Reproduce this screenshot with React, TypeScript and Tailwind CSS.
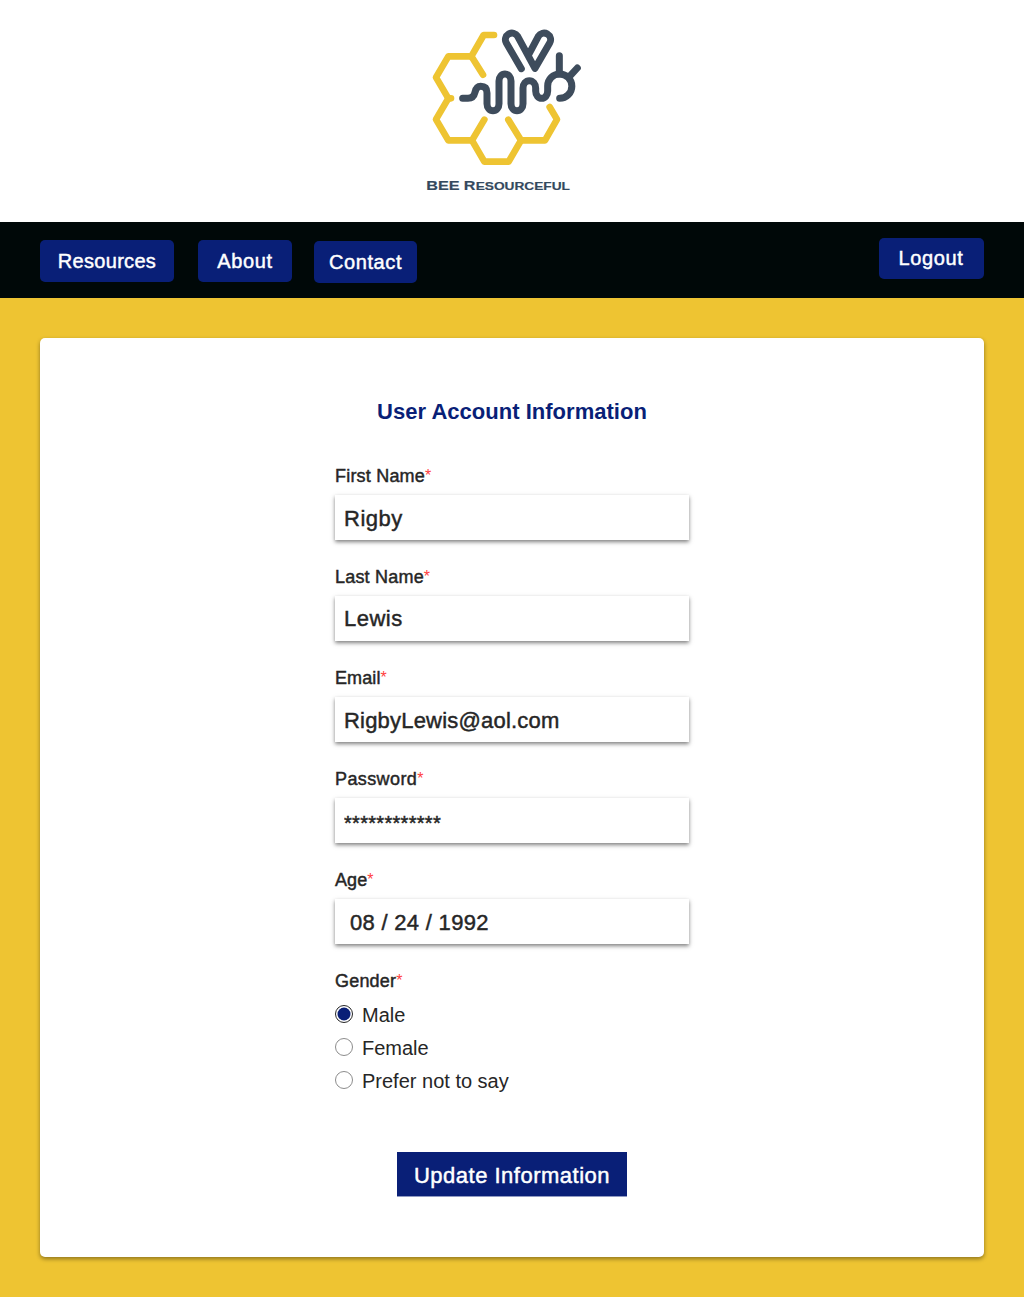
import React, { useState } from 'react';

const medium = '[-webkit-text-stroke:0.45px_currentColor]';

function Logo() {
  return (
    <svg viewBox="0 0 540 540" className="ml-[416px] h-[180px] w-[180px]" role="img" aria-label="BEE Resourceful">
      <g fill="none" stroke="#eec432" strokeWidth="20" strokeLinecap="round" strokeLinejoin="round">
        <path d="M234 45H203L166 109L201 164" />
        <path d="M166 109H97L60 172L97 235H105" />
        <path d="M97 235L60 298L97 361H168L205 299" />
        <path d="M168 361L205 425H278L315 361L277 299" />
        <path d="M315 361H387L423 298L401 261" />
      </g>
      <g fill="none" stroke="#3e4c5c" strokeWidth="21" strokeLinecap="round" strokeLinejoin="round">
        <path d="M140 235H156Q173 235 177 217Q181 199 194 199Q213 199 213 219V251A18 21 0 0 0 249 251V183A18 21 0 0 1 285 183V251A18 21 0 0 0 321 251V204A19 22 0 0 1 359 204V213A18 22 0 0 0 395 213V198A36 36 0 0 1 431 162A36.5 36.5 0 0 1 431 235" />
        <path d="M430 162V107M460 170L484 144" />
        <path d="M316 146L271 69A19.5 19.5 0 0 1 305 49L357 145L401 69A19.5 19.5 0 0 0 367 49L338 104" />
      </g>
      <g className="fill-[#34495e] stroke-[#34495e] font-['Liberation_Sans'] font-bold" strokeWidth="0.5">
        <text x="31" y="511" textLength="100" lengthAdjust="spacingAndGlyphs" className="text-[39px]">BEE</text>
        <text x="143" y="511" textLength="35" lengthAdjust="spacingAndGlyphs" className="text-[39px]">R</text>
        <text x="179" y="511" textLength="283" lengthAdjust="spacingAndGlyphs" className="text-[33px]">ESOURCEFUL</text>
      </g>
    </svg>
  );
}

const fields = [
  { label: 'First Name', labelCls: 'tracking-[0.2px]', value: 'Rigby', cls: 'pl-[9px] pt-[3px] text-[22px] tracking-[0.5px]' },
  { label: 'Last Name', labelCls: 'tracking-[0.2px]', value: 'Lewis', cls: 'pl-[9px] text-[22px] tracking-[0.5px]' },
  { label: 'Email', labelCls: 'tracking-[0.1px]', value: 'RigbyLewis@aol.com', cls: 'pl-[9px] pt-[3px] text-[22px] tracking-[0.2px]' },
  { label: 'Password', labelCls: 'tracking-[0.4px]', value: '************', cls: 'pl-[9px] pt-[6px] text-[20px] tracking-[0.3px]' },
  { label: 'Age', labelCls: 'tracking-[0.1px]', value: '08 / 24 / 1992', cls: 'pl-[15px] pt-[3px] text-[22px] tracking-[0.3px]' },
];

function Label({ text, cls }: { text: string; cls: string }) {
  return (
    <span className="flex h-[30px] items-start text-[18px] leading-[24px] text-[#262626]">
      <span className={`${medium} ${cls}`}>{text}</span>
      <span className="text-[16px] text-[#ff4040]">*</span>
    </span>
  );
}

export default function App() {
  const [gender, setGender] = useState('Male');
  return (
    <div className="w-[1024px] bg-white font-['Liberation_Sans',sans-serif]">
      <header className="h-[222px] pt-[20px]">
        <Logo />
      </header>
      <nav className={`flex h-[76px] items-start bg-[#000808] px-[40px] text-[20px] leading-[41px] text-white ${medium}`}>
        <button className="mt-[18px] h-[42px] w-[134px] rounded-[5px] bg-[#091f77] tracking-[0.3px]">Resources</button>
        <button className="ml-[24px] mt-[18px] h-[42px] w-[94px] rounded-[5px] bg-[#091f77] tracking-[0.6px]">About</button>
        <button className="ml-[22px] mt-[19px] h-[42px] w-[103px] rounded-[5px] bg-[#091f77] tracking-[0.6px]">Contact</button>
        <button className="ml-auto mt-[16px] h-[41px] w-[105px] rounded-[5px] bg-[#091f77] pr-[1px] tracking-[0.6px]">Logout</button>
      </nav>
      <main className="h-[999px] bg-[#eec432] p-[40px]">
        <form className="flex h-[919px] flex-col items-center rounded-[5px] bg-white pt-[58px] shadow-[0_2px_4px_rgba(0,0,0,0.4)]">
          <h1 className="h-[68px] text-[22px] font-bold leading-[32px] tracking-[0.02px] text-[#091f77]">User Account Information</h1>
          <div className="w-[354px]">
            {fields.map((f) => (
              <label key={f.label} className="block h-[101px]">
                <Label text={f.label} cls={f.labelCls} />
                <input
                  defaultValue={f.value}
                  className={`mt-[1px] block h-[45px] w-full bg-white text-[#262626] shadow-[0_2px_4px_rgba(0,0,0,0.5)] outline-none ${medium} ${f.cls}`}
                />
              </label>
            ))}
            <Label text="Gender" cls="tracking-[0.2px]" />
            <div className="-mt-[2px] flex flex-col">
              {['Male', 'Female', 'Prefer not to say'].map((g) => (
                <label key={g} className="flex h-[33.3px] items-center text-[20px] leading-[30px] text-[#262626]">
                  <input type="radio" name="gender" className="sr-only" checked={gender === g} onChange={() => setGender(g)} />
                  <svg viewBox="0 0 18 18" className="-ml-[0.5px] mr-[9.5px] h-[18px] w-[18px]">
                    <circle cx="9" cy="9" r="8.5" fill="white" stroke={gender === g ? '#262626' : '#8c8c8c'} strokeWidth="1" />
                    {gender === g && <circle cx="9" cy="9" r="6.5" fill="#091f77" />}
                  </svg>
                  <span className="pt-[2px]">{g}</span>
                </label>
              ))}
            </div>
          </div>
          <button type="button" className={`mt-[55px] h-[44px] w-[230px] bg-[#091f77] pt-[3px] text-[22px] tracking-[0.5px] text-white shadow-[0_1px_0_rgba(9,31,119,0.45)] ${medium}`}>
            Update Information
          </button>
        </form>
      </main>
    </div>
  );
}
